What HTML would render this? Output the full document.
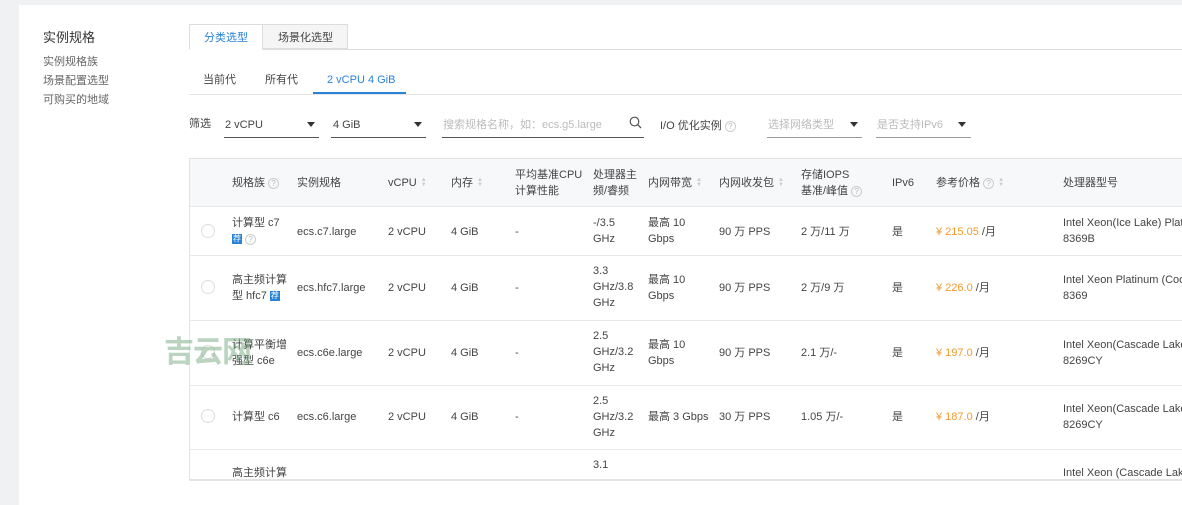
<!DOCTYPE html>
<html><head><meta charset="utf-8"><style>
*{margin:0;padding:0;box-sizing:border-box}
body{width:1182px;height:500px;overflow:hidden;background:#f0f1f3;font-family:"Liberation Sans","Noto Sans CJK SC",sans-serif;font-size:11px;color:#444;position:relative}
.card{position:absolute;left:19px;top:5px;width:1170px;height:500px;background:#fff}
.a{position:absolute;white-space:nowrap;line-height:16px}
.g{color:#666}
.q{display:inline-block;width:11px;height:11px;border:1px solid #ccc;border-radius:50%;font-size:8px;line-height:9px;text-align:center;color:#bbb;vertical-align:middle}
.s{display:inline-block;width:6px;vertical-align:middle;font-size:6px;line-height:5px;color:#ccc;margin-left:4px}
.tj{display:inline-block;width:10px;height:10px;background:#2a83d8;color:#fff;font-size:8px;line-height:10px;text-align:center;vertical-align:middle}
.rad{position:absolute;left:201px;width:14px;height:14px;border:1px solid #ddd;border-radius:50%}
.hl{position:absolute;left:189px;width:1000px;height:1px;background:#e8e8e8}
.or{color:#f39a2b}
.sel{position:absolute;height:1px;background:#555;top:137px}
.tri{position:absolute;width:0;height:0;border-left:4px solid transparent;border-right:4px solid transparent;border-top:5px solid #333;top:122px}
</style></head><body>
<div class="card"></div>
<div class="a" style="left:43px;top:30px;font-size:13px;color:#333">实例规格</div>
<div class="a g" style="left:43px;top:54px">实例规格族</div>
<div class="a g" style="left:43px;top:73px">场景配置选型</div>
<div class="a g" style="left:43px;top:92px">可购买的地域</div>

<div style="position:absolute;left:189px;top:49px;width:1000px;height:1px;background:#ddd"></div>
<div style="position:absolute;left:189px;top:24px;width:74px;height:26px;border:1px solid #ddd;border-bottom:1px solid #fff;background:#fff"></div>
<div style="position:absolute;left:262px;top:24px;width:86px;height:25px;border:1px solid #ddd;background:#f5f5f5"></div>
<div class="a" style="left:204px;top:30px;color:#2a83d8">分类选型</div>
<div class="a" style="left:278px;top:30px">场景化选型</div>

<div style="position:absolute;left:189px;top:94px;width:1000px;height:1px;background:#e5e5e5"></div>
<div class="a" style="left:203px;top:72px">当前代</div>
<div class="a" style="left:265px;top:72px">所有代</div>
<div class="a" style="left:327px;top:72px;color:#2a83d8">2 vCPU 4 GiB</div>
<div style="position:absolute;left:313px;top:92px;width:93px;height:2px;background:#2a83d8"></div>

<div class="a" style="left:189px;top:116px">筛选</div>
<div class="a" style="left:225px;top:117px">2 vCPU</div><div class="tri" style="left:307px"></div><div class="sel" style="left:224px;width:95px"></div>
<div class="a" style="left:333px;top:117px">4 GiB</div><div class="tri" style="left:414px"></div><div class="sel" style="left:331px;width:95px"></div>
<div class="a" style="left:443px;top:117px;color:#bbb">搜索规格名称，如：ecs.g5.large</div><div class="sel" style="left:442px;width:202px"></div>
<svg style="position:absolute;left:629px;top:116px" width="13" height="13" viewBox="0 0 13 13"><circle cx="5.5" cy="5.5" r="4.3" fill="none" stroke="#555" stroke-width="1.2"/><path d="M8.6 8.6L12 12" stroke="#555" stroke-width="1.3"/></svg>
<div class="a" style="left:660px;top:118px">I/O 优化实例 <span class="q">?</span></div>
<div class="a" style="left:768px;top:117px;color:#bbb">选择网络类型</div><div class="tri" style="left:850px"></div><div class="sel" style="left:767px;width:95px;background:#999"></div>
<div class="a" style="left:877px;top:117px;color:#bbb">是否支持IPv6</div><div class="tri" style="left:958px"></div><div class="sel" style="left:876px;width:95px;background:#999"></div>

<div style="position:absolute;left:189px;top:158px;width:1000px;height:322px;border:1px solid #e3e3e3;border-right:none"></div>
<div style="position:absolute;left:190px;top:159px;width:1000px;height:48px;background:#f7f8fa;border-bottom:1px solid #e8e8e8"></div>
<div class="a" style="left:232px;top:175px">规格族 <span class="q">?</span></div>
<div class="a" style="left:297px;top:175px">实例规格</div>
<div class="a" style="left:388px;top:175px">vCPU<span class="s">▲<br>▼</span></div>
<div class="a" style="left:451px;top:175px">内存<span class="s">▲<br>▼</span></div>
<div class="a" style="left:515px;top:167px">平均基准CPU<br>计算性能</div>
<div class="a" style="left:593px;top:167px">处理器主<br>频/睿频</div>
<div class="a" style="left:648px;top:175px">内网带宽<span class="s">▲<br>▼</span></div>
<div class="a" style="left:719px;top:175px">内网收发包<span class="s">▲<br>▼</span></div>
<div class="a" style="left:801px;top:167px">存储IOPS<br>基准/峰值 <span class="q">?</span></div>
<div class="a" style="left:892px;top:175px">IPv6</div>
<div class="a" style="left:936px;top:175px">参考价格 <span class="q">?</span><span class="s">▲<br>▼</span></div>
<div class="a" style="left:1063px;top:175px">处理器型号</div>

<div class="hl" style="top:255px"></div><div class="hl" style="top:320px"></div><div class="hl" style="top:385px"></div><div class="hl" style="top:449px"></div>

<!-- row1 -->
<div class="rad" style="top:224px"></div>
<div class="a" style="left:232px;top:215px">计算型 c7</div>
<div class="a" style="left:232px;top:231px"><span class="tj">荐</span> <span class="q">?</span></div>
<div class="a" style="left:297px;top:224px">ecs.c7.large</div>
<div class="a" style="left:388px;top:224px">2 vCPU</div>
<div class="a" style="left:451px;top:224px">4 GiB</div>
<div class="a" style="left:515px;top:224px">-</div>
<div class="a" style="left:593px;top:215px">-/3.5<br>GHz</div>
<div class="a" style="left:648px;top:215px">最高 10<br>Gbps</div>
<div class="a" style="left:719px;top:224px">90 万 PPS</div>
<div class="a" style="left:801px;top:224px">2 万/11 万</div>
<div class="a" style="left:892px;top:224px">是</div>
<div class="a" style="left:936px;top:224px"><span class="or">¥ 215.05</span> /月</div>
<div class="a" style="left:1063px;top:215px">Intel Xeon(Ice Lake) Platinum<br>8369B</div>
<!-- row2 -->
<div class="rad" style="top:280px"></div>
<div class="a" style="left:232px;top:272px">高主频计算<br>型 hfc7 <span class="tj">荐</span></div>
<div class="a" style="left:297px;top:280px">ecs.hfc7.large</div>
<div class="a" style="left:388px;top:280px">2 vCPU</div>
<div class="a" style="left:451px;top:280px">4 GiB</div>
<div class="a" style="left:515px;top:280px">-</div>
<div class="a" style="left:593px;top:263px">3.3<br>GHz/3.8<br>GHz</div>
<div class="a" style="left:648px;top:272px">最高 10<br>Gbps</div>
<div class="a" style="left:719px;top:280px">90 万 PPS</div>
<div class="a" style="left:801px;top:280px">2 万/9 万</div>
<div class="a" style="left:892px;top:280px">是</div>
<div class="a" style="left:936px;top:280px"><span class="or">¥ 226.0</span> /月</div>
<div class="a" style="left:1063px;top:272px">Intel Xeon Platinum (Cooper<br>8369</div>
<!-- row3 -->
<div class="rad" style="top:345px"></div>
<div class="a" style="left:232px;top:337px">计算平衡增<br>强型 c6e</div>
<div class="a" style="left:297px;top:345px">ecs.c6e.large</div>
<div class="a" style="left:388px;top:345px">2 vCPU</div>
<div class="a" style="left:451px;top:345px">4 GiB</div>
<div class="a" style="left:515px;top:345px">-</div>
<div class="a" style="left:593px;top:328px">2.5<br>GHz/3.2<br>GHz</div>
<div class="a" style="left:648px;top:337px">最高 10<br>Gbps</div>
<div class="a" style="left:719px;top:345px">90 万 PPS</div>
<div class="a" style="left:801px;top:345px">2.1 万/-</div>
<div class="a" style="left:892px;top:345px">是</div>
<div class="a" style="left:936px;top:345px"><span class="or">¥ 197.0</span> /月</div>
<div class="a" style="left:1063px;top:337px">Intel Xeon(Cascade Lake)<br>8269CY</div>
<div class="a" style="left:164px;top:336px;font-size:30px;line-height:34px;font-weight:bold;color:rgba(120,170,130,0.5);letter-spacing:-1px">吉云网</div>
<!-- row4 -->
<div class="rad" style="top:409px"></div>
<div class="a" style="left:232px;top:409px">计算型 c6</div>
<div class="a" style="left:297px;top:409px">ecs.c6.large</div>
<div class="a" style="left:388px;top:409px">2 vCPU</div>
<div class="a" style="left:451px;top:409px">4 GiB</div>
<div class="a" style="left:515px;top:409px">-</div>
<div class="a" style="left:593px;top:393px">2.5<br>GHz/3.2<br>GHz</div>
<div class="a" style="left:648px;top:409px">最高 3 Gbps</div>
<div class="a" style="left:719px;top:409px">30 万 PPS</div>
<div class="a" style="left:801px;top:409px">1.05 万/-</div>
<div class="a" style="left:892px;top:409px">是</div>
<div class="a" style="left:936px;top:409px"><span class="or">¥ 187.0</span> /月</div>
<div class="a" style="left:1063px;top:401px">Intel Xeon(Cascade Lake)<br>8269CY</div>
<!-- row5 clipped -->
<div style="position:absolute;left:190px;top:450px;width:1000px;height:30px;overflow:hidden">
<div class="a" style="left:42px;top:15px">高主频计算</div>
<div class="a" style="left:403px;top:7px">3.1</div>
<div class="a" style="left:873px;top:15px">Intel Xeon (Cascade Lake</div>
</div>
<div style="position:absolute;left:189px;top:480px;width:1000px;height:1px;background:#e3e3e3"></div>
</body></html>
